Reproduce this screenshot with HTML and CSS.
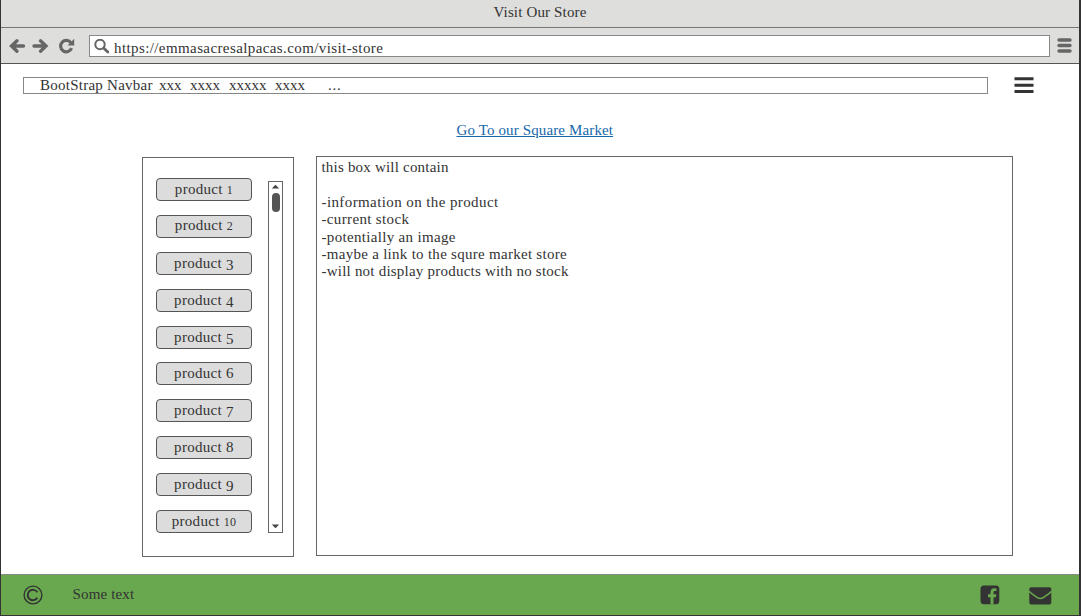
FILE: index.html
```html
<!DOCTYPE html>
<html lang="en">
<head>
<meta charset="utf-8">
<title>Visit Our Store</title>
<link rel="stylesheet" href="styles.css">
</head>
<body>
<div class="window">
  <header class="titlebar"><span class="title">Visit Our Store</span></header>
  <div class="toolbar">
    <svg class="controls" width="72" height="20" viewBox="0 0 72 20">
      <g fill="none" stroke="#666" stroke-width="3.4">
        <path d="M3.500 10H15.500M9 4.800L3.500 10l5.500 5.200" stroke-linecap="round"/>
        <path d="M26 10H38M32.500 4.800L38 10l-5.500 5.200" stroke-linecap="round"/>
        <path d="M63 6.800A5.700 5.700 0 1 0 63.600 12.200" stroke-width="3.2"/>
      </g>
      <path d="M66.200 2.800v6.600h-6.600z" fill="#666"/>
    </svg>
    <div class="address">
      <svg class="search" width="16" height="16" viewBox="0 0 16 16"><circle cx="6" cy="5.500" r="4.700" fill="none" stroke="#666" stroke-width="2"/><path d="M9.600 9.100l4.200 4" stroke="#666" stroke-width="2.800" stroke-linecap="round"/></svg>
      <span class="url">https://emmasacresalpacas.com/visit-store</span>
    </div>
    <svg class="menu" width="15" height="16" viewBox="0 0 15 16"><path d="M2 2h11M2 7.500h11M2 13h11" stroke="#666" stroke-width="3.400" stroke-linecap="round"/></svg>
  </div>
  <main class="page">
    <div class="navrow">
      <nav class="navbar"><span class="brand">BootStrap Navbar</span><span class="n1">xxx</span><span class="n2">xxxx</span><span class="n3">xxxxx</span><span class="n4">xxxx</span><span class="more">...</span></nav>
      <svg class="burger" width="20" height="17" viewBox="0 0 20 17"><path d="M.5 1.700h19M.5 8.200h19M.5 14.500h19" stroke="#333" stroke-width="3"/></svg>
    </div>
    <div class="linkrow"><a class="market" href="#">Go To our Square Market</a></div>
    <div class="content">
      <section class="catalog">
        <div class="products">
          <button class="product">product <span class="short">1</span></button>
          <button class="product">product <span class="short">2</span></button>
          <button class="product">product <span class="low">3</span></button>
          <button class="product">product <span class="low">4</span></button>
          <button class="product">product <span class="low">5</span></button>
          <button class="product">product <span>6</span></button>
          <button class="product">product <span class="low">7</span></button>
          <button class="product">product <span>8</span></button>
          <button class="product">product <span class="low">9</span></button>
          <button class="product">product <span class="short">10</span></button>
        </div>
        <div class="scrollbar">
          <svg width="9" height="5" viewBox="0 0 9 5"><path d="M.8 4.500L4.500.8l3.700 3.700z" fill="#444"/></svg>
          <div class="thumb"></div>
          <svg class="down" width="9" height="5" viewBox="0 0 9 5"><path d="M.8.5h7.400L4.500 4.200z" fill="#444"/></svg>
        </div>
      </section>
      <section class="details">
        <p class="l1">this box will contain</p>
        <p>&nbsp;</p>
        <p class="l2">-information on the product</p>
        <p class="l3">-current stock</p>
        <p class="l4">-potentially an image</p>
        <p class="l5">-maybe a link to the squre market store</p>
        <p class="l6">-will not display products with no stock</p>
      </section>
    </div>
  </main>
  <footer class="footer">
    <svg class="copyright" width="20" height="20" viewBox="0 0 20 20" fill="none" stroke="#333"><circle cx="10" cy="10" r="8.900" stroke-width="1.400"/><path d="M14.300 7.200A5.200 5.200 0 1 0 14.300 12.800" stroke-width="1.900"/></svg>
    <span class="note">Some text</span>
    <svg class="facebook" width="20" height="20" viewBox="0 0 20 20"><rect x=".5" y=".5" width="18.800" height="18.800" rx="3.500" fill="#333"/><path d="M10.500 19.300v-7.100H8V9.300h2.500V7.200c0-2.500 1.500-3.900 3.800-3.900l2.200.1V6H15c-1.200 0-1.500.6-1.500 1.400v1.900h2.800l-.4 2.900h-2.400v7.100z" fill="#69a84f"/></svg>
    <svg class="mail" width="23" height="18" viewBox="0 0 23 18"><rect x=".3" y=".3" width="22" height="17.200" rx="1.800" fill="#333"/><path d="M0 4.200c2 2.300 5 4 8 6.200q3.300 2.400 6.600 0c3-2.200 6-3.900 8-6.200" fill="none" stroke="#69a84f" stroke-width="1.500"/></svg>
  </footer>
</div>
</body>
</html>
```
FILE: styles.css
```css
* { box-sizing: border-box; }
body {
  margin: 0;
  background: #fff;
  color: #333;
  font: 15px/17.3px "Liberation Serif", serif;
  overflow: hidden;
}
svg { display: block; flex: none; }
span, a, p { white-space: nowrap; }
p { margin: 0; }
.window {
  width: 1081px;
  height: 616px;
  display: flex;
  flex-direction: column;
  border: solid #333;
  border-width: 0 2px 1px 1px;
}
.titlebar {
  height: 27px;
  flex: none;
  padding-top: 4px;
  text-align: center;
  letter-spacing: .15px;
  background: #dededc;
}
.toolbar {
  height: 37px;
  flex: none;
  display: flex;
  background: #dededc;
  border-top: 1px solid #777;
  border-bottom: 1px solid #555;
}
.controls { margin: 8px 0 0 7px; }
.address {
  width: 961px;
  height: 22px;
  margin: 7px 0 0 9px;
  display: flex;
  background: #fff;
  border: 1px solid #888;
}
.search { margin: 3px 0 0 4px; }
.url { margin: 4px 0 0 4px; letter-spacing: .4px; }
.menu { margin: 10px 0 0 7px; }
.page { flex: 1; min-height: 0; background: #fff; }
.navrow { display: flex; padding: 13px 0 0 22px; }
.navbar {
  width: 965px;
  height: 17px;
  display: flex;
  border: 1px solid #888;
  padding-left: 16px;
  line-height: 15px;
}
.brand { width: 119px; letter-spacing: .25px; }
.n1 { width: 31px; }
.n2 { width: 39px; }
.n3 { width: 46px; }
.n4 { width: 53px; }
.more { letter-spacing: .8px; }
.burger { margin-left: 26px; }
.linkrow { height: 62px; padding: 28px 0 0 455.5px; }
.market {
  color: #1668aa;
  letter-spacing: .13px;
  text-decoration-thickness: 1px;
  text-underline-offset: 1px;
}
.content { display: flex; gap: 22px; padding-left: 141px; }
.catalog {
  width: 152px;
  height: 400px;
  margin-top: 1px;
  display: flex;
  border: 1px solid #666;
  padding: 20px 0 0 13px;
}
.products { display: flex; flex-direction: column; gap: 13.9px; }
.product {
  width: 96px;
  height: 23px;
  flex: none;
  border: 1px solid #555;
  border-radius: 4px;
  background: #dcdcdc;
  color: #333;
  font: 15px/19px "Liberation Serif", serif;
  letter-spacing: .3px;
  padding: 0;
  white-space: nowrap;
}
.short { font-size: 12px; }
.low { position: relative; top: 2px; }
.scrollbar {
  width: 15px;
  height: 352px;
  margin: 3px 0 0 16px;
  border: 1px solid #666;
  display: flex;
  flex-direction: column;
  align-items: center;
  padding: 2px 0 3px;
}
.thumb { width: 8px; height: 19px; margin-top: 4px; border-radius: 4px; background: #555; }
.down { margin-top: auto; }
.details { width: 697px; height: 400px; border: 1px solid #666; padding: 2.4px 0 0 4.5px; }
.l1 { letter-spacing: .2px; }
.l2 { letter-spacing: .4px; }
.l3 { letter-spacing: .35px; }
.l4 { letter-spacing: .32px; }
.l5 { letter-spacing: .28px; }
.l6 { letter-spacing: .22px; }
.footer {
  height: 41px;
  flex: none;
  display: flex;
  background: #69a84f;
  border-top: 1px solid #888;
}
.copyright { margin: 10px 0 0 22px; }
.note { margin: 11px 0 0 29.5px; letter-spacing: .15px; }
.facebook { margin: 10px 0 0 auto; }
.mail { margin: 12px 27px 0 29px; }
```
